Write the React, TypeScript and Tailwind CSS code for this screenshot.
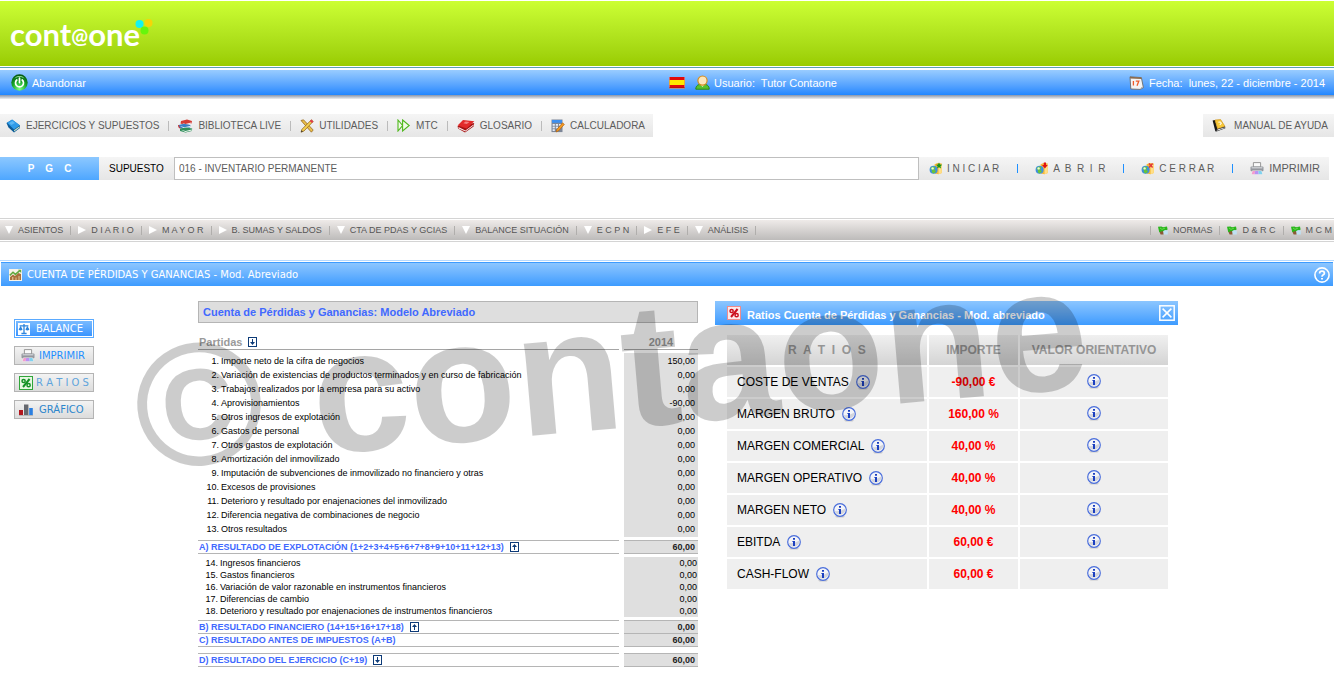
import React from "react";

type IconProps = { className?: string };

const BookBlue = () => (
  <svg width="15" height="14" viewBox="0 0 15 14" aria-hidden="true">
    <path d="M0.5 4 6 .8 14 6.5 14 9 8 13.5 2.5 8.5Z" fill="#0b5a96" />
    <path d="M1 3.8 6.2 .6 13.8 6.2 8 10.6Z" fill="#2f9be8" />
    <path d="M3 4 6.4 2 9 4 5.2 6Z" fill="#5cb8f5" />
    <path d="M8 11.2 13.6 7.2 13.6 8.6 8.2 12.6Z" fill="#cfe6c8" />
  </svg>
);

const BooksStack = () => (
  <svg width="15" height="14" viewBox="0 0 15 14" aria-hidden="true">
    <path d="M3 2 9 .5 14 2 13.5 4.5 7 6 2.5 4.5Z" fill="#d43c34" />
    <path d="M4 3.8 7.4 5 13.2 3.4 13.2 4.4 7.2 6Z" fill="#f6eeee" />
    <path d="M.6 6 6 4.8 12.4 6 12 8.6 6 10 1 8.4Z" fill="#3a7fc4" />
    <path d="M2 7 6.3 8.2 12 6.9 12 8 6.2 9.4Z" fill="#eef4fa" />
    <path d="M2 9.4 8 8.6 14.2 9.4 13.8 12 7.6 13.6 2 12Z" fill="#2f8f5b" />
    <path d="M3 10.8 7.6 12 13.8 10.6 13.8 11.6 7.4 13Z" fill="#f4f8f4" />
    <path d="M.6 6 1 8.6 2.4 9" stroke="#c22" fill="none" />
  </svg>
);

const Tools = () => (
  <svg width="14" height="14" viewBox="0 0 14 14" aria-hidden="true">
    <path d="M1 1.5 3.5.8 13.2 11 11.4 13.2Z" fill="#e9c04c" stroke="#8c5a14" strokeWidth=".7" />
    <path d="M11.4.8 13.2 2.4 4 12 1 13.2 2 10.2Z" fill="#f2cf52" stroke="#8c5a14" strokeWidth=".7" />
    <path d="M11.2 .6 13.4 2.6 12 4 9.8 2.2Z" fill="#e03a4c" />
    <path d="M1 13.2 1.6 11.2 3 12.6Z" fill="#333" />
  </svg>
);

const FastForward = () => (
  <svg width="14" height="13" viewBox="0 0 14 13" aria-hidden="true" fill="#f2fbe8" stroke="#4fb81c" strokeWidth="1.1">
    <path d="M1 1 5.6 6.5 1 12Z" />
    <path d="M5.6 1 12.2 6.5 5.6 12Z" />
  </svg>
);

const BookRed = () => (
  <svg width="18" height="14" viewBox="0 0 18 14" aria-hidden="true">
    <path d="M.6 7 1 9.6 8 13.4 16.6 7.6 17.2 4Z" fill="#a51212" />
    <path d="M1.4 8 8.4 11.4 16.6 5.4 16.6 6.6 8.4 12.6 1.6 9.4Z" fill="#fbeeee" />
    <path d="M.6 6.6 6 1 17.4 2.2 9.6 9.6Z" fill="#e22a2a" />
    <path d="M6.4 4.2 8.6 2.6 12.4 3 9.8 5Z" fill="#f58080" />
  </svg>
);

const CalcIcon = () => (
  <svg width="14" height="14" viewBox="0 0 14 14" aria-hidden="true">
    <rect x=".5" y=".5" width="11" height="12.6" fill="#7c8698" />
    <rect x="1" y="1" width="10" height="2.8" fill="#3d8ff0" />
    <g fill="#e6ebf4">
      <rect x="1.6" y="5" width="2.2" height="1.8" />
      <rect x="4.8" y="5" width="2.2" height="1.8" />
      <rect x="8" y="5" width="2.2" height="1.8" />
      <rect x="1.6" y="7.6" width="2.2" height="1.8" />
      <rect x="4.8" y="7.6" width="2.2" height="1.8" />
      <rect x="1.6" y="10.2" width="2.2" height="1.8" />
    </g>
    <path d="M11.6 3.8 13.4 5.4 7.6 11.8 5 13 5.8 10.4Z" fill="#f49a22" stroke="#a85a0a" strokeWidth=".6" />
  </svg>
);

const ManualIcon = () => (
  <svg width="14" height="13" viewBox="0 0 14 13" aria-hidden="true">
    <path d="M.6 1.4 3 1 5.6 10 3.4 12.4Z" fill="#161616" />
    <path d="M3 1 8.6.6 13 7.4 5.6 9.8Z" fill="#f7c93a" stroke="#c98a0b" strokeWidth=".6" />
    <path d="M5.4 10 13 7.6 13.4 9.2 4.6 12.6 3.4 12.2Z" fill="#2b2b2b" />
    <path d="M5.6 10.4 12.6 8.4 12.8 9 5 11.8Z" fill="#fff" />
    <path d="M6.4 3.2 8.6 3 9.4 4.6 8 5 8.4 6" stroke="#fff" fill="none" />
  </svg>
);

const PowerIcon = () => (
  <svg width="17" height="17" viewBox="0 0 17 17" aria-hidden="true">
    <defs>
      <radialGradient id="pw" cx="50%" cy="90%" r="95%">
        <stop offset="0" stopColor="#7dff86" />
        <stop offset=".5" stopColor="#15a526" />
        <stop offset="1" stopColor="#03480c" />
      </radialGradient>
    </defs>
    <circle cx="8.5" cy="8.5" r="8.2" fill="url(#pw)" />
    <path d="M3.4 4.4A6.6 6.6 0 0 1 13.6 4.4Q8.5 1 3.4 4.4Z" fill="#a8f5ae" />
    <path d="M5.8 6A4 4 0 1 0 11.2 6" fill="none" stroke="#fff" strokeWidth="1.7" strokeLinecap="round" />
    <path d="M8.5 4V8.6" stroke="#fff" strokeWidth="1.7" strokeLinecap="round" />
  </svg>
);

const Flag = () => (
  <svg width="16" height="12" viewBox="0 0 16 12" aria-hidden="true">
    <rect width="16" height="12" rx="1" fill="#c8c8c8" />
    <rect x=".5" width="15" height="11" fill="#e00a0a" />
    <rect x=".5" y="3" width="15" height="5" fill="#ffe900" />
    <path d="M0 11H16" stroke="#6b1010" strokeWidth=".6" />
  </svg>
);

const UserIcon = () => (
  <svg width="15" height="15" viewBox="0 0 15 15" aria-hidden="true">
    <path d="M.8 14.2C.8 10.4 3.6 9 7.5 9S14.2 10.4 14.2 14.2Z" fill="#57c12c" stroke="#2c8a10" />
    <path d="M5.4 9.4 7.5 12 9.6 9.4Z" fill="#dff5d0" />
    <circle cx="7.5" cy="5.6" r="4.6" fill="#fbe6bb" stroke="#d78b1c" strokeWidth="1.2" />
  </svg>
);

const CalendarIcon = () => (
  <svg width="15" height="14" viewBox="0 0 15 14" aria-hidden="true">
    <path d="M1 .8 12.4 1.6 14.4 11.6 11 13.4 1.8 13Z" fill="#f4f4f4" stroke="#6a6a6a" strokeWidth=".9" />
    <path d="M1 .8 12.4 1.6 12.6 3 1.2 2.4Z" fill="#8b6a4d" />
    <path d="M4.4 5V9.6M6.8 5.2H9.8L8 9.8" stroke="#ee5a28" strokeWidth="1.3" fill="none" />
    <path d="M12 12.8 14.4 11.4 12 11Z" fill="#b4b4b4" />
  </svg>
);

const GlobeFolder = ({ mark }: { mark: string }) => (
  <svg width="14" height="13" viewBox="0 0 14 13" aria-hidden="true">
    <path d="M5.6 2.2 8.6 1 12.8 1.6V11L9.4 12.2 5.6 11.4Z" fill="#f5b93c" />
    <path d="M9.6 3.4 12.8 2.6V11L9.6 12.2Z" fill="#ffdf87" />
    <circle cx="4.6" cy="7.8" r="4" fill="#3d8fe0" />
    <path d="M1.4 6.2Q4 3.4 6.4 5.2L5.4 7.6 7 9.6 4.8 11.6Q2 10.6 3 8.2Z" fill="#68c43a" />
    <circle cx="3.6" cy="6.4" r="1.2" fill="#e8f9e0" />
    {mark === "star" && <path d="M10 .4 11 2.6 13.2 2.8 11.6 4.2 12 6.4 10 5.2 8 6.4 8.6 4.2 7 2.8 9 2.6Z" fill="#189418" />}
    {mark === "down" && <path d="M8.8.4H11V3H12.8L9.9 6.4 7 3H8.8Z" fill="#e01212" />}
    {mark === "close" && <path d="M8 1.6 11.6 5.4M11.6 1.6 8 5.4" stroke="#e23a3a" strokeWidth="1.5" />}
  </svg>
);

const Printer = () => (
  <svg width="14" height="13" viewBox="0 0 14 13" aria-hidden="true">
    <path d="M3.4.6H10.6V5H3.4Z" fill="#fafafa" stroke="#8d8d8d" strokeWidth=".9" />
    <rect x=".5" y="4.6" width="13" height="4.6" rx="1" fill="#94979e" />
    <rect x="1.6" y="5.2" width="10.8" height="1.2" fill="#d4d6da" />
    <path d="M2.4 8.6H11.6L12.8 12.4H1.2Z" fill="#f0f0f0" />
    <path d="M2.6 9H5.2L4.6 12.2H1.6Z" fill="#f59ccc" />
    <path d="M5.2 9H8.4L8.8 12.2H4.6Z" fill="#b993f2" />
    <path d="M8.4 9H11.4L12.4 12.2H8.8Z" fill="#7fd2f0" />
  </svg>
);

const Triangle = ({ down }: { down?: boolean }) => (
  <svg width="8" height="8" viewBox="0 0 8 8" aria-hidden="true" fill="#fff">
    {down ? <path d="M0 0H8L4 8Z" /> : <path d="M0 0 8 4 0 8Z" />}
  </svg>
);

const NormIcon = () => (
  <svg width="10" height="9" viewBox="0 0 10 9" aria-hidden="true">
    <path d="M0 .8 3.4.4 5 1.2 9 .6 9.6 3.4 7.4 5 4 7.6 1.2 6Z" fill="#29b61c" />
    <path d="M2 2 4 3.4 7 2" stroke="#7be05a" fill="none" strokeWidth=".8" />
    <path d="M5 5.2 7 4 9.8 4.6V8.6H5.4Z" fill="#bfe0f2" />
    <path d="M1.6 6 5 5 5.6 8.6 2.6 8.4Z" fill="#8a5a34" />
  </svg>
);

const ChartIcon = () => (
  <svg width="13" height="12" viewBox="0 0 13 12" aria-hidden="true">
    <rect width="13" height="12" fill="#f8f4ea" />
    <path d="M1 8 4 5.4 6 7 9.4 4 12 5V11H1Z" fill="#a8703c" />
    <path d="M3 8H4.4V11H3ZM6.4 8.4H7.6V11H6.4ZM9.4 7H10.6V11H9.4Z" fill="#d9b684" />
    <path d="M.8 6.4 4 3.2 6.4 5.4 11 1.4" stroke="#5fa83c" strokeWidth="1.5" fill="none" />
    <path d="M9 .8H12.2V4Z" fill="#5fa83c" />
  </svg>
);

const ScaleIcon = () => (
  <svg width="12" height="12" viewBox="0 0 12 12" aria-hidden="true">
    <rect width="12" height="12" fill="#fff" />
    <path d="M6 1V10M1.6 2.8H10.4M3.4 10.5H8.6" stroke="#2b84dd" strokeWidth="1.3" />
    <path d="M.6 6.6 2.6 3 4.6 6.6Q2.6 8.6.6 6.6ZM7.4 6.6 9.4 3 11.4 6.6Q9.4 8.6 7.4 6.6Z" fill="#2b84dd" />
  </svg>
);

const PercentIcon = ({ red }: { red?: boolean }) => (
  <svg width="14" height="14" viewBox="0 0 14 14" aria-hidden="true">
    <rect x=".5" y=".5" width="13" height="13" fill={red ? "#fdeaea" : "#e6f8e2"} stroke={red ? "#f08c8c" : "#31a53a"} />
    <g stroke={red ? "#cc0f1d" : "#139224"} fill="none">
      <path d="M10.6 3 4 11" strokeWidth="2" />
      <circle cx="4.6" cy="5" r="1.6" strokeWidth="1.5" />
      <circle cx="9.6" cy="9.2" r="1.6" strokeWidth="1.5" />
    </g>
  </svg>
);

const BarsIcon = () => (
  <svg width="14" height="12" viewBox="0 0 14 12" aria-hidden="true">
    <rect x="0" y="6" width="4" height="5" fill="#b3161d" />
    <rect x="5" y=".5" width="4.4" height="10.5" fill="#66696f" />
    <rect x="10.2" y="4" width="3.6" height="7" fill="#2b7fe0" />
    <path d="M0 11.5H14" stroke="#b8b8b8" />
  </svg>
);

const ArrowBox = ({ up }: { up?: boolean }) => (
  <svg width="9" height="10" viewBox="0 0 9 10" aria-hidden="true">
    <rect x=".5" y=".5" width="8" height="9" fill="#fff" stroke="#0d3b78" />
    {up ? (
      <path d="M4 8H5V5H7L4.5 2 2 5H4Z" fill="#0d3b78" />
    ) : (
      <path d="M4 2H5V5H7L4.5 8 2 5H4Z" fill="#0d3b78" />
    )}
  </svg>
);

const InfoIcon = () => (
  <svg width="14" height="15" viewBox="0 0 14 15" aria-hidden="true">
    <ellipse cx="7" cy="13.4" rx="4.6" ry="1.2" fill="#c9c9cc" />
    <circle cx="7" cy="7" r="6.3" fill="#f3f4f8" stroke="#4a6edb" strokeWidth="1.2" />
    <path d="M1.6 8Q7 9 12.4 5.6A5.6 5.6 0 0 1 1.6 8Z" fill="#d3d5dc" />
    <path d="M6 3H8V4.8H6ZM5.4 6H8V11H6V7H5.4Z" fill="#1b3fc0" />
  </svg>
);

const HelpIcon = () => (
  <svg width="16" height="16" viewBox="0 0 16 16" aria-hidden="true" fill="none" stroke="#fff">
    <circle cx="8" cy="8" r="7.1" strokeWidth="1.6" />
    <path d="M5.6 6.4Q5.6 4.2 8 4.2T10.4 6.3Q10.4 7.4 9 8.1 8 8.7 8 9.8" strokeWidth="1.7" />
    <path d="M8 10.9V12.5" strokeWidth="1.9" />
  </svg>
);

const CloseIcon = () => (
  <svg width="16" height="16" viewBox="0 0 16 16" aria-hidden="true" fill="none" stroke="#fff">
    <rect x=".8" y=".8" width="14.4" height="14.4" strokeWidth="1.5" />
    <path d="M3.6 3.6 12.4 12.4M12.4 3.6 3.6 12.4" strokeWidth="1.5" />
  </svg>
);

const Sep = ({ className = "h-3 bg-[#bbb]" }: IconProps) => <span className={`w-px shrink-0 ${className}`} />;

const mainMenu = [
  { label: "EJERCICIOS Y SUPUESTOS", icon: <BookBlue /> },
  { label: "BIBLIOTECA LIVE", icon: <BooksStack /> },
  { label: "UTILIDADES", icon: <Tools /> },
  { label: "MTC", icon: <FastForward /> },
  { label: "GLOSARIO", icon: <BookRed /> },
  { label: "CALCULADORA", icon: <CalcIcon /> },
];

const actions = [
  { label: "I N I C I A R", mark: "star" },
  { label: "A  B  R  I  R", mark: "down" },
  { label: "C E R R A R", mark: "close" },
];

const reports = [
  { label: "ASIENTOS", down: true },
  { label: "D I A R I O", down: false },
  { label: "M A Y O R", down: false },
  { label: "B. SUMAS Y SALDOS", down: false },
  { label: "CTA DE PDAS Y GCIAS", down: true },
  { label: "BALANCE SITUACIÓN", down: true },
  { label: "E C P N", down: true },
  { label: "E F E", down: false },
  { label: "ANÁLISIS", down: true },
];

const operating = [
  ["Importe neto de la cifra de negocios", "150,00"],
  ["Variación de existencias de productos terminados y en curso de fabricación", "0,00"],
  ["Trabajos realizados por la empresa para su activo", "0,00"],
  ["Aprovisionamientos", "-90,00"],
  ["Otros ingresos de explotación", "0,00"],
  ["Gastos de personal", "0,00"],
  ["Otros gastos de explotación", "0,00"],
  ["Amortización del inmovilizado", "0,00"],
  ["Imputación de subvenciones de inmovilizado no financiero y otras", "0,00"],
  ["Excesos de provisiones", "0,00"],
  ["Deterioro y resultado por enajenaciones del inmovilizado", "0,00"],
  ["Diferencia negativa de combinaciones de negocio", "0,00"],
  ["Otros resultados", "0,00"],
];

const financial = [
  ["Ingresos financieros", "0,00"],
  ["Gastos financieros", "0,00"],
  ["Variación de valor razonable en instrumentos financieros", "0,00"],
  ["Diferencias de cambio", "0,00"],
  ["Deterioro y resultado por enajenaciones de instrumentos financieros", "0,00"],
];

const ratios = [
  ["COSTE DE VENTAS", "-90,00 €"],
  ["MARGEN BRUTO", "160,00 %"],
  ["MARGEN COMERCIAL", "40,00 %"],
  ["MARGEN OPERATIVO", "40,00 %"],
  ["MARGEN NETO", "40,00 %"],
  ["EBITDA", "60,00 €"],
  ["CASH-FLOW", "60,00 €"],
];

function Spacer({ className, shade }: { className: string; shade?: boolean }) {
  return (
    <tr aria-hidden="true">
      <td className={`p-0 ${className}`} />
      <td />
      <td className={shade ? "bg-[#dfdfdf]" : ""} />
    </tr>
  );
}

function TotalRow({ label, value, arrow, top = true }: { label: string; value: string; arrow?: "up" | "down"; top?: boolean }) {
  const line = top ? "h-[14px] border-y" : "h-[13px] border-b";
  return (
    <tr className="font-bold leading-3">
      <th scope="row" className={`border-[#b5b5b5] p-0 pl-px text-left text-[#4169ff] ${line}`}>
        <span className="flex items-center gap-[6px]">
          {label}
          {arrow && (
            <button type="button" aria-label={arrow === "up" ? "Contraer" : "Desplegar"}>
              <ArrowBox up={arrow === "up"} />
            </button>
          )}
        </span>
      </th>
      <td />
      <td className={`border-[#b5b5b5] bg-[#dfdfdf] p-0 pr-[3px] text-right text-[#222] ${line}`}>{value}</td>
    </tr>
  );
}

function ItemRow({ index, label, value, tall }: { index: number; label: string; value: string; tall?: boolean }) {
  return (
    <tr className={tall ? "h-[14px] leading-[14px]" : "h-3 leading-3"}>
      <td className="p-0">
        <span className="flex gap-[2px]">
          <span className={`text-right ${tall ? "w-[21px]" : "w-5"}`}>{index}.</span>
          {label}
        </span>
      </td>
      <td />
      <td className={`bg-[#dfdfdf] p-0 text-right ${tall ? "pr-[3px]" : "pr-px"}`}>{value}</td>
    </tr>
  );
}

function IncomeStatement() {
  return (
    <section className="w-[500px] shrink-0">
      <h2 className="h-[22px] border border-[#b5b5b5] bg-[#dedede] pl-1 text-[11px] font-bold leading-5 text-[#4169ff]">
        Cuenta de Pérdidas y Ganancias: Modelo Abreviado
      </h2>
      <table className="mt-3 w-full table-fixed border-separate border-spacing-0 whitespace-nowrap text-[9px] text-black">
        <colgroup>
          <col />
          <col className="w-[5px]" />
          <col className="w-[74px]" />
        </colgroup>
        <thead>
          <tr className="text-[11px] leading-[14px] text-[#9a9a9a]">
            <th scope="col" className="h-[15px] border-b border-[#a5a5a5] p-0 pl-px text-left">
              <span className="flex items-center gap-[6px]">
                Partidas
                <button type="button" aria-label="Desplegar">
                  <ArrowBox />
                </button>
              </span>
            </th>
            <td />
            <th scope="col" className="border-b border-[#a5a5a5] p-0 text-center">2014</th>
          </tr>
        </thead>
        <tbody>
          <Spacer className="h-[3px]" />
          <Spacer className="h-px" shade />
          {operating.map(([label, value], i) => (
            <ItemRow key={label} index={i + 1} label={label} value={value} tall />
          ))}
          <Spacer className="h-px" shade />
          <Spacer className="h-[3px]" />
          <TotalRow label="A) RESULTADO DE EXPLOTACIÓN (1+2+3+4+5+6+7+8+9+10+11+12+13)" value="60,00" arrow="up" />
          <Spacer className="h-[3px]" />
          {financial.map(([label, value], i) => (
            <ItemRow key={label} index={i + 14} label={label} value={value} />
          ))}
          <Spacer className="h-[3px]" />
          <TotalRow label="B) RESULTADO FINANCIERO (14+15+16+17+18)" value="0,00" arrow="up" />
          <TotalRow label="C) RESULTADO ANTES DE IMPUESTOS (A+B)" value="60,00" top={false} />
          <Spacer className="h-[6px]" />
          <TotalRow label="D) RESULTADO DEL EJERCICIO (C+19)" value="60,00" arrow="down" />
        </tbody>
      </table>
    </section>
  );
}

function RatiosPanel() {
  const head = "h-[30px] bg-linear-to-b from-[#f0f0f0] to-[#d4d4d4] p-0 text-center font-bold";
  return (
    <section className="w-[463px] shrink-0">
      <header className="flex h-6 items-center bg-linear-to-b from-[#8cc6ff] to-[#3c9bff] pl-3 pr-[3px] text-white">
        <PercentIcon red />
        <h2 className="ml-[6px] grow pt-1 text-[11px] font-bold leading-4">
          Ratios Cuenta de Pérdidas y Ganancias - Mod. abreviado
        </h2>
        <button type="button" aria-label="Cerrar">
          <CloseIcon />
        </button>
      </header>
      <table className="ml-[10px] mt-2 w-[445px] table-fixed border-separate border-spacing-[2px] text-[12px] leading-4">
        <colgroup>
          <col className="w-[200px]" />
          <col className="w-[89px]" />
          <col />
        </colgroup>
        <thead className="text-[#959595]">
          <tr>
            <th scope="col" className={`whitespace-pre ${head}`}>R  A  T  I  O  S</th>
            <th scope="col" className={head}>IMPORTE</th>
            <th scope="col" className={head}>VALOR ORIENTATIVO</th>
          </tr>
        </thead>
        <tbody>
          {ratios.map(([label, value]) => (
            <tr key={label} className="bg-[#efefef]">
              <th scope="row" className="h-[30px] p-0 pl-[10px] text-left font-normal text-black">
                <span className="flex items-center gap-[7px]">
                  {label}
                  <button type="button" aria-label={`Información: ${label}`}>
                    <InfoIcon />
                  </button>
                </span>
              </th>
              <td className="p-0 text-center font-bold text-[#f00]">{value}</td>
              <td className="p-0 pb-[2px]">
                <button type="button" aria-label={`Valor orientativo: ${label}`} className="mx-auto block">
                  <InfoIcon />
                </button>
              </td>
            </tr>
          ))}
        </tbody>
      </table>
    </section>
  );
}

function SideButtons() {
  const plain =
    "flex h-[19px] w-20 items-center border border-[#b4b4b4] bg-linear-to-b from-[#f3f3f3] to-[#dcdcdc] whitespace-nowrap";
  return (
    <nav className="flex shrink-0 flex-col gap-2 pt-[18px] font-['DejaVu_Sans',sans-serif] text-[10px] leading-4">
      <button
        type="button"
        className="flex h-[19px] w-20 items-center gap-[6px] border border-[#5aaaff] bg-linear-to-b from-[#7dbdff] to-[#3392ff] pl-[3px] text-white inset-ring inset-ring-white"
      >
        <ScaleIcon />
        BALANCE
      </button>
      <button type="button" className={`gap-1 pl-[6px] text-[#1e8fff] ${plain}`}>
        <Printer />
        IMPRIMIR
      </button>
      <button type="button" className={`gap-[3px] pl-1 text-[#5fa4dc] ${plain}`}>
        <PercentIcon />
        R A T I O S
      </button>
      <button type="button" className={`gap-[6px] pl-1 text-[#2c86cc] ${plain}`}>
        <BarsIcon />
        GRÁFICO
      </button>
    </nav>
  );
}

export default function App() {
  return (
    <div className="min-h-screen overflow-x-hidden bg-white pt-px font-['Liberation_Sans',Arial,sans-serif]">
      <header className="flex h-[65px] items-center bg-linear-to-b from-[#ccff33] to-[#99cc00] pl-[10px]">
        <h1 className="font-['Lato',sans-serif] text-[31px] font-bold leading-9 text-white">
          cont<span className="align-[3px] text-[20px] leading-none">@</span>one
        </h1>
        <svg className="-mt-[14px] -ml-[5px]" width="18" height="16" viewBox="0 0 18 16" aria-hidden="true">
          <circle cx="4.5" cy="5" r="4" fill="#13f3f0" />
          <circle cx="13.5" cy="4" r="4" fill="#f6d508" />
          <circle cx="9.5" cy="11.5" r="4" fill="#66f60c" />
        </svg>
      </header>

      <div className="mt-px h-px bg-[#5a9fb8]" />

      <div className="mt-[2px] grid h-[25px] grid-cols-2 items-center bg-linear-to-b from-[#99ccff] to-[#2087ff] text-[11px] leading-4 text-white">
        <a href="#" className="flex items-center gap-1 pl-[11px]">
          <PowerIcon />
          Abandonar
        </a>
        <div className="flex items-center justify-between pl-[2px] pr-[9px]">
          <div className="flex items-center">
            <button type="button" aria-label="Idioma: español">
              <Flag />
            </button>
            <span className="ml-[10px] mr-1">
              <UserIcon />
            </span>
            <span>Usuario:&nbsp; Tutor Contaone</span>
          </div>
          <div className="flex items-center gap-[5px]">
            <CalendarIcon />
            <span>Fecha:&nbsp; lunes, 22 - diciembre - 2014</span>
          </div>
        </div>
      </div>
      <div className="h-1 bg-linear-to-b from-[#8795ab] to-[#efefef]" />

      <nav className="mt-[15px] flex justify-between text-[10px] leading-4 text-[#5c5c5c]">
        <div className="flex h-[23px] items-center gap-[9px] bg-linear-to-b from-[#f5f5f5] to-[#e6e6e6] pl-[6px] pr-2">
          {mainMenu.map((item, i) => (
            <React.Fragment key={item.label}>
              {i > 0 && <Sep className="h-[10px] bg-[#bbb]" />}
              <a href="#" className="flex items-center gap-[5px] whitespace-nowrap">
                {item.icon}
                {item.label}
              </a>
            </React.Fragment>
          ))}
        </div>
        <a
          href="#"
          className="flex h-[23px] items-center gap-2 bg-linear-to-b from-[#f5f5f5] to-[#e6e6e6] pl-[9px] pr-[6px]"
        >
          <ManualIcon />
          MANUAL DE AYUDA
        </a>
      </nav>

      <div className="mt-5 flex h-[23px] items-stretch pr-[5px] text-[10px] leading-[23px] text-[#5c5c5c]">
        <span className="w-[99px] whitespace-pre bg-linear-to-b from-[#8cc8ff] to-[#4da6ff] text-center font-bold text-white">P    G    C</span>
        <label htmlFor="supuesto" className="w-[75px] bg-linear-to-b from-[#f5f5f5] to-[#e6e6e6] pl-[10px] text-black">
          SUPUESTO
        </label>
        <input
          id="supuesto"
          type="text"
          defaultValue="016 - INVENTARIO PERMANENTE"
          className="min-w-0 grow border border-[#bfbfbf] bg-white px-1 outline-none"
        />
        <div className="flex w-[410px] shrink-0 items-center justify-between bg-linear-to-b from-[#f5f5f5] to-[#e6e6e6] pl-[10px] pr-[9px]">
          {actions.map((a) => (
            <React.Fragment key={a.label}>
              <button type="button" className="flex items-center gap-1 whitespace-pre">
                <GlobeFolder mark={a.mark} />
                {a.label}
              </button>
              <Sep className="h-[9px] bg-[#1e90ff]" />
            </React.Fragment>
          ))}
          <button type="button" className="flex items-center gap-[5px] text-[11px]">
            <Printer />
            IMPRIMIR
          </button>
        </div>
      </div>

      <nav className="mt-[38px] border-y border-[#d4d4d4] py-px text-[9px] leading-4 text-[#555]">
        <div className="flex h-5 items-center justify-between bg-linear-to-b from-[#efebe9] to-[#bdbbba] pl-[5px] pr-[2px]">
          <div className="flex items-center gap-[7px]">
            {reports.map((r) => (
              <React.Fragment key={r.label}>
                <a href="#" className="flex items-center gap-[5px] whitespace-nowrap">
                  <Triangle down={r.down} />
                  {r.label}
                </a>
                <Sep className="h-[9px] bg-[#b0aeac]" />
              </React.Fragment>
            ))}
          </div>
          <div className="flex items-center gap-[7px]">
            {["NORMAS", "D & R C", "M C M"].map((label) => (
              <React.Fragment key={label}>
                <Sep className="h-[9px] bg-[#b0aeac]" />
                <a href="#" className="flex items-center gap-[5px] whitespace-nowrap">
                  <NormIcon />
                  {label}
                </a>
              </React.Fragment>
            ))}
          </div>
        </div>
      </nav>

      <div className="mt-[18px] border-t border-[#b5d9ff] px-px pt-px">
        <div className="flex h-6 items-center justify-between border-t border-[#3c9bff] bg-linear-to-b from-[#8cc6ff] to-[#3c9bff] pl-2 pr-[3px] text-white">
          <h2 className="flex items-center gap-[5px] font-['DejaVu_Sans',sans-serif] text-[10px] leading-4">
            <ChartIcon />
            CUENTA DE PÉRDIDAS Y GANANCIAS - Mod. Abreviado
          </h2>
          <button type="button" aria-label="Ayuda">
            <HelpIcon />
          </button>
        </div>
      </div>

      <main className="relative flex items-start pl-[14px] pt-[15px]">
        <SideButtons />
        <div className="ml-[104px] flex items-start gap-[17px]">
          <IncomeStatement />
          <RatiosPanel />
        </div>
        <p
          aria-hidden="true"
          className="pointer-events-none absolute left-[140px] top-[36px] origin-[0_148px] rotate-[-5deg] whitespace-nowrap text-[175px] font-bold leading-none text-black/20"
        >
          © contaone
        </p>
      </main>
    </div>
  );
}
